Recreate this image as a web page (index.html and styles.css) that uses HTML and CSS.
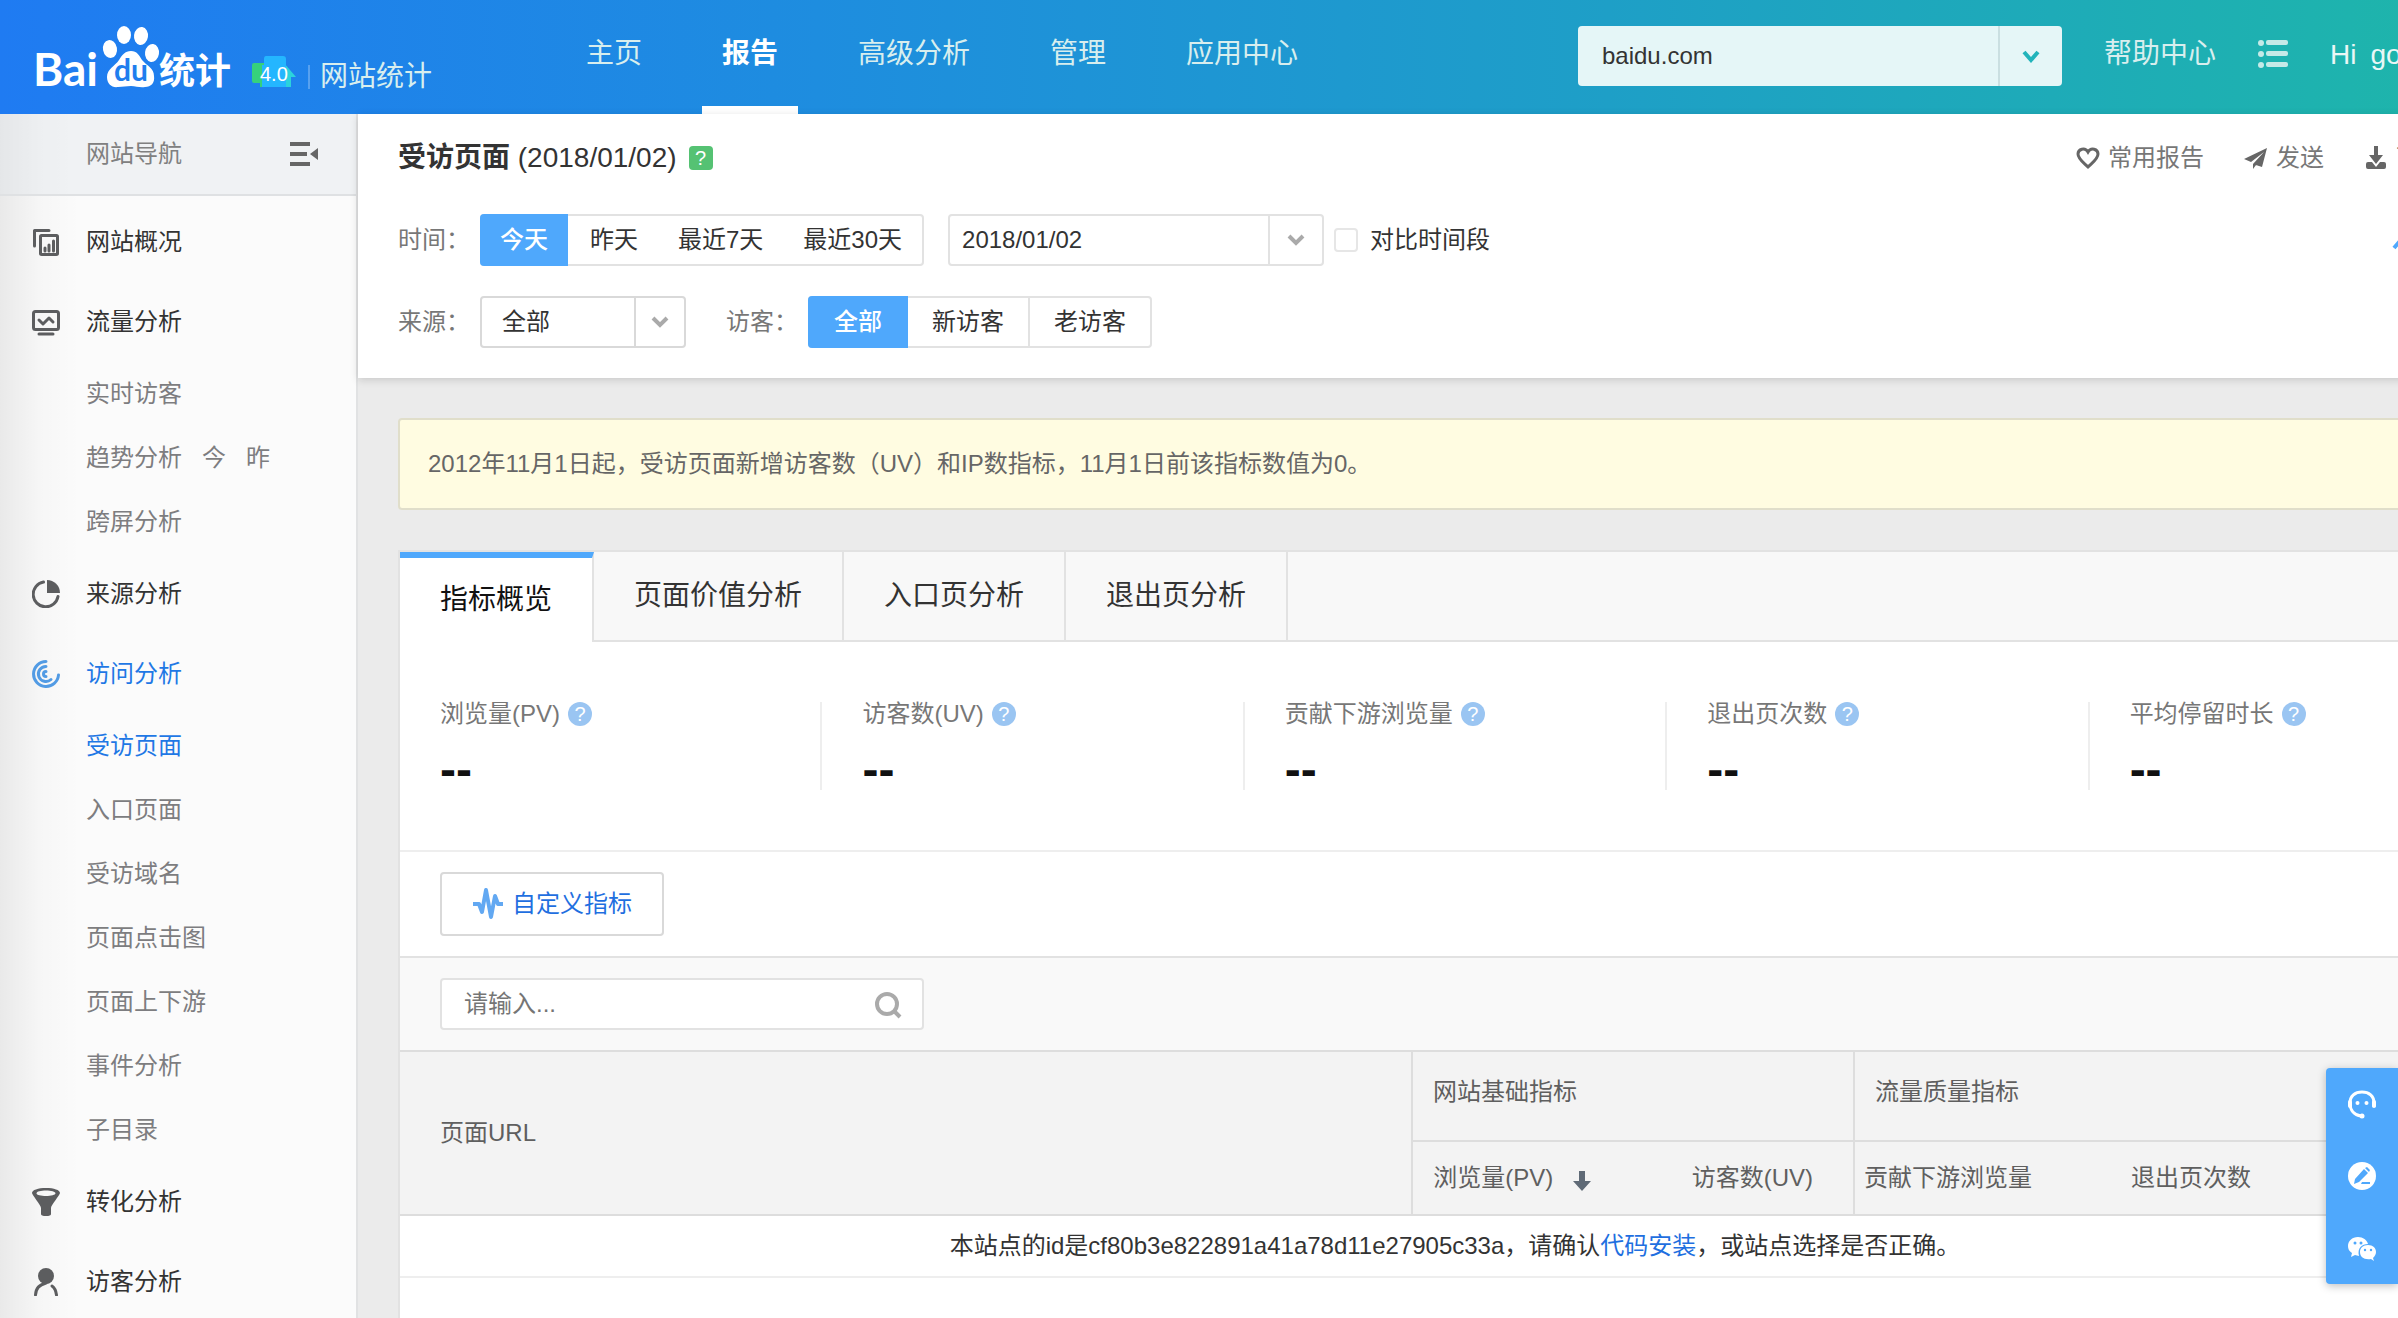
FILE: index.html
```html
<!DOCTYPE html>
<html lang="zh-CN">
  <head>
    <meta charset="UTF-8" />
    <meta name="viewport" content="width=device-width, initial-scale=1.0" />
    <title>受访页面 - 百度统计</title>
    <link rel="stylesheet" href="styles.css">
  </head>

  <body>
    <header class="header">
      <a class="brand" href="#">
        <svg class="brand-logo" width="264" height="64" viewBox="34 24 264 64">
          <text class="logo-latin" x="33" y="85">Bai</text>
          <g fill="#fff">
            <ellipse cx="110" cy="48" rx="7" ry="9" transform="rotate(-10 110 48)" />
            <ellipse cx="124" cy="34" rx="7" ry="9" />
            <ellipse cx="141" cy="35" rx="7" ry="9" transform="rotate(8 141 35)" />
            <ellipse cx="152" cy="52" rx="7" ry="9" transform="rotate(8 152 52)" />
            <path d="M131 50c-6 0-9 4-12 9-4 6-12 9-12 17 0 7 5 11 11 10 5 0 8-1 13-1s9 2 14 1c6 0 10-4 9-11 0-8-7-10-12-16-3-5-5-9-11-9z" />
          </g>
          <text class="logo-du" x="114" y="80">du</text>
          <text class="logo-cn" x="159" y="83">统计</text>
          <path fill="#36d17c" d="M254 62h12v24h-6v-4h-6q-2 0-2-2V64q0-2 2-2z" />
          <path fill="#2bd3dc" d="M284 62l12 14h-5v10h-20z" />
          <path fill="#24b6ff" d="M266 55h17q3 0 3 3v28h-24V64h2v-6q0-3 2-3z" />
          <text class="logo-version" x="260" y="80">4.0</text>
        </svg>
        <span class="brand-name">网站统计</span>
      </a>
      <nav class="nav">
        <a href="#">主页</a>
        <a class="active" href="#">报告</a>
        <a href="#">高级分析</a>
        <a href="#">管理</a>
        <a href="#">应用中心</a>
      </nav>
      <div class="select select-site">
        <select aria-label="选择网站">
          <option>baidu.com</option>
        </select>
        <span class="select-arrow">
          <svg width="20" height="14" viewBox="0 0 20 14"><path d="M3 3l7 8 7-8" /></svg>
        </span>
      </div>
      <a class="header-link" href="#">帮助中心</a>
      <button class="header-list" type="button" aria-label="列表">
        <svg width="30" height="28" viewBox="0 0 30 28">
          <circle cx="3" cy="3" r="3" /><rect x="8" y="0" width="22" height="5" rx="2" />
          <circle cx="3" cy="14" r="3" /><rect x="8" y="11" width="22" height="5" rx="2" />
          <circle cx="3" cy="25" r="3" /><rect x="8" y="22" width="22" height="5" rx="2" />
        </svg>
      </button>
      <div class="header-user"><span>Hi</span><span>go</span></div>
    </header>

    <div class="layout">
      <aside class="sidebar">
        <div class="sidebar-title">
          <span>网站导航</span>
          <button type="button" aria-label="收起导航">
            <svg width="28" height="24" viewBox="0 0 28 24">
              <path d="M0 0h20v4H0zM0 10h17v4H0zM0 20h20v4H0zM28 6v12l-8-6z" />
            </svg>
          </button>
        </div>
        <ul class="menu">
          <li class="menu-item">
            <svg class="line" width="28" height="28" viewBox="0 0 28 28">
              <path d="M2.500 18V2.500H17" />
              <rect x="8.500" y="7.500" width="17" height="19" rx="1" />
              <path d="M13 20v3M17 17v6M21.500 13v10" />
            </svg>
            <a href="#">网站概况</a>
          </li>
          <li class="menu-item">
            <svg class="line" width="28" height="28" viewBox="0 0 28 28">
              <rect x="1.500" y="3.500" width="25" height="18" rx="2" />
              <path d="M7 12l4 4 6-6 4 4M7 26h14" />
            </svg>
            <a href="#">流量分析</a>
          </li>
          <li class="menu-sub"><a href="#">实时访客</a></li>
          <li class="menu-sub"><a href="#">趋势分析</a><a href="#">今</a><a href="#">昨</a></li>
          <li class="menu-sub"><a href="#">跨屏分析</a></li>
          <li class="menu-item">
            <svg class="line" width="28" height="28" viewBox="0 0 28 28">
              <path d="M11.500 2A12.500 12.500 0 1 0 26 16.500" />
              <path class="solid" d="M15 0a13 13 0 0 1 13 13H15z" />
            </svg>
            <a href="#">来源分析</a>
          </li>
          <li class="menu-item current">
            <svg class="line" width="28" height="28" viewBox="0 0 28 28">
              <path d="M14 1.500A12.500 12.500 0 1 0 26.500 15" />
              <path d="M14 6.500a7.500 7.500 0 1 0 5 13" />
              <path d="M14 11.500a2.500 2.500 0 0 0 0 5" />
            </svg>
            <a href="#">访问分析</a>
          </li>
          <li class="menu-sub current"><a href="#">受访页面</a></li>
          <li class="menu-sub"><a href="#">入口页面</a></li>
          <li class="menu-sub"><a href="#">受访域名</a></li>
          <li class="menu-sub"><a href="#">页面点击图</a></li>
          <li class="menu-sub"><a href="#">页面上下游</a></li>
          <li class="menu-sub"><a href="#">事件分析</a></li>
          <li class="menu-sub"><a href="#">子目录</a></li>
          <li class="menu-item">
            <svg width="28" height="28" viewBox="0 0 28 28">
              <path fill-rule="evenodd" d="M14 0c8 0 14 2 14 5 0 2-9 12-9 15v6q0 2-5 2t-5-2v-6C9 17 0 7 0 5c0-3 6-5 14-5zm0 2.500c-5 0-9.500 1-9.500 2.800S9 8 14 8s9.500-1 9.500-2.700S19 2.500 14 2.500z" />
            </svg>
            <a href="#">转化分析</a>
          </li>
          <li class="menu-item">
            <svg class="line" width="28" height="28" viewBox="0 0 28 28">
              <circle class="solid" cx="14" cy="8" r="8" />
              <path d="M14 15C7 17 4 20 3.500 27M20 18c3 2 4 5 4.500 9" />
            </svg>
            <a href="#">访客分析</a>
          </li>
        </ul>
      </aside>

      <main class="main">
        <section class="report-head">
          <div class="title-row">
            <h1>受访页面 <span>(2018/01/02)</span></h1>
            <button class="help help-green" type="button">?</button>
            <div class="actions">
              <a href="#">
                <svg width="24" height="24" viewBox="0 0 24 24"><path class="stroke" d="M12 21C8 17 2 13 2 8c0-5 7-7 10-2 3-5 10-3 10 2 0 5-6 9-10 13z" /></svg>
                常用报告
              </a>
              <a href="#">
                <svg width="24" height="24" viewBox="0 0 24 24"><path d="M23 2L0 13l7 3L20 6 9 18l9 3zM9 18v5l3-4z" /></svg>
                发送
              </a>
              <a href="#">
                <svg width="24" height="24" viewBox="0 0 24 24"><path d="M10 0h4v9h5l-7 9-7-9h5zM4 16h4l4 5 4-5h4q2 0 2 2v3q0 2-2 2H4q-2 0-2-2v-3q0-2 2-2z" /></svg>
                下载
              </a>
            </div>
          </div>

          <div class="filter-row">
            <span class="filter-label">时间：</span>
            <div class="segment segment-time">
              <button class="active" type="button">今天</button>
              <button type="button">昨天</button>
              <button type="button">最近7天</button>
              <button type="button">最近30天</button>
            </div>
            <div class="date-picker">
              <input type="text" value="2018/01/02" aria-label="日期" />
              <button type="button" aria-label="选择日期">
                <svg width="20" height="14" viewBox="0 0 20 14"><path d="M3 3l7 7 7-7" /></svg>
              </button>
            </div>
            <label class="compare"><input type="checkbox" />对比时间段</label>
            <button class="fold" type="button" aria-label="收起筛选">
              <svg width="28" height="20" viewBox="0 0 28 20"><path d="M2 18L14 4l12 14" /></svg>
            </button>
          </div>

          <div class="filter-row">
            <label class="filter-label" for="source">来源：</label>
            <div class="select select-source">
              <select id="source">
                <option>全部</option>
              </select>
              <span class="select-arrow">
                <svg width="20" height="14" viewBox="0 0 20 14"><path d="M3 3l7 7 7-7" /></svg>
              </span>
            </div>
            <span class="filter-label visitor-label">访客：</span>
            <div class="segment segment-visitor">
              <button class="active" type="button">全部</button>
              <button type="button">新访客</button>
              <button type="button">老访客</button>
            </div>
          </div>
        </section>

        <div class="content">
          <p class="notice">2012年11月1日起，受访页面新增访客数（UV）和IP数指标，11月1日前该指标数值为0。</p>

          <section class="panel">
            <div class="tabs">
              <button class="active" type="button">指标概览</button>
              <button type="button">页面价值分析</button>
              <button type="button">入口页分析</button>
              <button type="button">退出页分析</button>
            </div>

            <div class="metrics">
              <div class="metric">
                <div class="metric-name">浏览量(PV)<button class="help" type="button">?</button></div>
                <div class="metric-value">--</div>
              </div>
              <div class="metric">
                <div class="metric-name">访客数(UV)<button class="help" type="button">?</button></div>
                <div class="metric-value">--</div>
              </div>
              <div class="metric">
                <div class="metric-name">贡献下游浏览量<button class="help" type="button">?</button></div>
                <div class="metric-value">--</div>
              </div>
              <div class="metric">
                <div class="metric-name">退出页次数<button class="help" type="button">?</button></div>
                <div class="metric-value">--</div>
              </div>
              <div class="metric">
                <div class="metric-name">平均停留时长<button class="help" type="button">?</button></div>
                <div class="metric-value">--</div>
              </div>
            </div>

            <div class="custom">
              <button type="button">
                <svg width="32" height="32" viewBox="0 0 32 32"><path d="M1 16h6l3 8 4-22 5 27 4-21 3 8h5" /></svg>
                自定义指标
              </button>
            </div>

            <div class="search">
              <div class="search-box">
                <input type="text" placeholder="请输入..." aria-label="搜索页面" />
                <button type="button" aria-label="搜索">
                  <svg width="28" height="28" viewBox="0 0 28 28"><circle cx="13" cy="13" r="10" /><path d="M20 20l6 6" /></svg>
                </button>
              </div>
            </div>

            <table class="report">
              <colgroup>
                <col />
                <col class="col-base" span="2" />
                <col class="col-quality" span="3" />
              </colgroup>
              <thead>
                <tr>
                  <th class="url" rowspan="2">页面URL</th>
                  <th class="group split" colspan="2">网站基础指标</th>
                  <th class="group split" colspan="3">流量质量指标</th>
                </tr>
                <tr>
                  <th class="split">
                    浏览量(PV)
                    <svg class="sort" width="20" height="22" viewBox="0 0 20 22"><path d="M7 1h6v10h6l-9 10-9-10h6z" /></svg>
                  </th>
                  <th>访客数(UV)</th>
                  <th class="split">贡献下游浏览量</th>
                  <th>退出页次数</th>
                  <td></td>
                </tr>
              </thead>
              <tbody>
                <tr>
                  <td colspan="6">本站点的id是cf80b3e822891a41a78d11e27905c33a，请确认<a href="#">代码安装</a>，或站点选择是否正确。</td>
                </tr>
              </tbody>
            </table>
          </section>
        </div>
      </main>
    </div>

    <div class="float-bar">
      <button type="button" aria-label="在线客服">
        <svg width="30" height="30" viewBox="0 0 30 30">
          <path class="stroke" d="M14 27C7 26 3 21 3 14 3 7 8 3 15 3s12 4 12 11v4" />
          <rect x="1" y="11" width="4" height="8" rx="2" /><rect x="25" y="11" width="4" height="8" rx="2" />
          <circle cx="10.500" cy="14" r="2" /><circle cx="19.500" cy="14" r="2" /><circle cx="15" cy="27" r="2.500" />
        </svg>
      </button>
      <button type="button" aria-label="意见反馈">
        <svg width="30" height="30" viewBox="0 0 30 30">
          <circle cx="15" cy="15" r="14" />
          <path class="cut" d="M8 18L17 8l4 4-9 9-5 2zM18 7l2-1 3 3-1 2zM15 21h8v2h-9z" />
        </svg>
      </button>
      <button type="button" aria-label="微信">
        <svg width="30" height="30" viewBox="0 0 30 30">
          <path d="M11 4C5 4 1 8 1 13c0 3 1 5 4 7l-1 4 4-2 4 1c-2-8 3-12 9-12-1-4-5-7-10-7z" />
          <path d="M21 12c-5 0-8 3-8 7 0 5 4 8 11 7l3 2-1-3c2-2 3-4 3-6 0-4-3-7-8-7z" />
          <g class="cut"><circle cx="8" cy="10" r="1.500" /><circle cx="14" cy="10" r="1.500" /><circle cx="18" cy="17" r="1.200" /><circle cx="24" cy="17" r="1.200" /></g>
        </svg>
      </button>
    </div>
  </body>
</html>
```

FILE: styles.css
```css
* {
  box-sizing: border-box;
  margin: 0;
  padding: 0;
}

html {
  height: 100%;
  overflow: hidden;
}

body {
  display: flex;
  flex-direction: column;
  height: 100%;
  min-width: 2552px;
  overflow: hidden;
  font-family: "Liberation Sans", "Noto Sans CJK SC", sans-serif;
  font-size: 24px;
  line-height: 32px;
  color: #333;
  background: #ebebeb;
}

a {
  color: inherit;
  text-decoration: none;
}

button,
input,
select {
  font: inherit;
  color: inherit;
  border: none;
  outline: none;
  background: none;
  appearance: none;
}

button {
  cursor: pointer;
}

svg {
  flex: none;
  display: block;
}

/* header */

.header {
  flex: none;
  display: flex;
  align-items: center;
  height: 114px;
  padding: 0 40px 0 34px;
  color: #d8eeee;
  font-size: 28px;
  white-space: nowrap;
  background: linear-gradient(90deg, #1f7bf2, #1e8ddf 32%, #1e9fc7 63%, #1eb3ae 92%, #1fb6a6);
}

.brand {
  display: flex;
  align-items: flex-end;
}

.brand-logo {
  overflow: visible;
}

.logo-latin {
  font-family: Lato, sans-serif;
  font-size: 46px;
  font-weight: 700;
  fill: #fff;
}

.logo-du {
  font-family: Lato, sans-serif;
  font-size: 30px;
  font-weight: 700;
  fill: #1f7eee;
}

.logo-cn {
  font-size: 36px;
  font-weight: 700;
  fill: #fff;
}

.logo-version {
  font-size: 20px;
  fill: #fff;
}

.brand-name {
  margin-left: 10px;
  padding-left: 10px;
  line-height: 24px;
  border-left: 2px solid rgba(255, 255, 255, 0.25);
}

.nav {
  display: flex;
  gap: 40px;
  margin-left: 134px;
}

.nav a {
  display: flex;
  align-items: center;
  height: 114px;
  padding: 2px 20px 0;
  border-bottom: 8px solid transparent;
}

.nav .active {
  color: #fff;
  font-weight: 700;
  border-color: #fff;
}

.header-link {
  margin-left: 42px;
  padding-bottom: 6px;
}

.header-list {
  margin-left: 42px;
  padding-bottom: 6px;
  fill: #c5e9e7;
}

.header-user {
  display: flex;
  gap: 14px;
  width: 182px;
  margin-left: 42px;
  padding-bottom: 4px;
  color: #e9f7f6;
}

/* drop-downs: select and arrow share one grid cell */

.select {
  display: grid;
  height: 52px;
  border: 2px solid #d9d9d9;
  border-radius: 4px;
  background: #fff;
}

.select select,
.select-arrow {
  grid-area: 1 / 1;
}

.select select {
  padding: 0 20px;
}

.select-arrow {
  display: flex;
  align-items: center;
  justify-content: center;
  justify-self: end;
  width: 50px;
  border-left: 2px solid #d9d9d9;
  pointer-events: none;
}

.select-arrow path,
.date-picker path {
  fill: none;
  stroke: #aaa;
  stroke-width: 4;
}

.select-site {
  width: 484px;
  height: 60px;
  margin-left: auto;
  margin-bottom: 2px;
  color: #333;
  font-size: 24px;
  border: none;
  background: #e5f6f7;
}

.select-site select {
  padding: 0 24px;
}

.select-site .select-arrow {
  width: 64px;
  border-color: #cadfe1;
}

.select-site path {
  stroke: #22b4bb;
}

.select-source {
  width: 206px;
}

/* sidebar */

.layout {
  flex: 1;
  display: flex;
  min-height: 0;
}

.sidebar {
  flex: none;
  width: 358px;
  overflow: hidden;
  border-right: 2px solid #e1e2e3;
  background: linear-gradient(90deg, rgba(0, 0, 0, 0.07), rgba(0, 0, 0, 0.02) 40px, transparent 80px), #fbfbfb;
}

.sidebar-title {
  display: flex;
  align-items: center;
  justify-content: space-between;
  height: 82px;
  padding: 0 38px 0 86px;
  color: #808080;
  border-bottom: 2px solid #dfe1e3;
  background: rgba(220, 225, 232, 0.35);
}

.sidebar-title svg {
  fill: #666;
}

.menu {
  padding-top: 6px;
  list-style: none;
}

.menu-item {
  display: flex;
  align-items: center;
  gap: 26px;
  height: 80px;
  padding-left: 32px;
}

.menu-item svg {
  fill: #5c5d5f;
}

.menu-item .line {
  fill: none;
  stroke: #5c5d5f;
  stroke-width: 3;
  stroke-linecap: round;
  stroke-linejoin: round;
}

.menu-item .solid {
  fill: #5c5d5f;
  stroke: none;
}

.menu-sub {
  display: flex;
  align-items: center;
  gap: 20px;
  height: 64px;
  padding-left: 86px;
  color: #7d7d80;
}

.menu .current {
  color: #1f78e5;
}

.current .line {
  stroke: #529be4;
}

/* report header */

.main {
  flex: 1;
  display: flex;
  flex-direction: column;
  min-width: 0;
}

.report-head {
  flex: none;
  padding: 24px 40px 30px;
  background: #fff;
  box-shadow: 0 2px 8px rgba(0, 0, 0, 0.15);
}

.title-row {
  display: flex;
  align-items: center;
  height: 40px;
  margin-bottom: 36px;
}

.title-row h1 {
  font-size: 28px;
  line-height: 40px;
}

.title-row h1 span {
  font-weight: 400;
}

.help {
  width: 24px;
  height: 24px;
  margin-left: 8px;
  color: #fff;
  font-size: 20px;
  line-height: 24px;
  text-align: center;
  border-radius: 50%;
  background: #9ac5f2;
}

.help-green {
  margin-left: 12px;
  border-radius: 4px;
  background: #55c273;
}

.actions {
  display: flex;
  gap: 40px;
  margin-left: auto;
  padding-right: 68px;
  color: #777;
}

.actions a {
  display: flex;
  align-items: center;
  gap: 8px;
}

.actions svg {
  fill: #666;
}

.actions .stroke {
  fill: none;
  stroke: #666;
  stroke-width: 3;
}

.filter-row {
  display: flex;
  align-items: center;
  height: 52px;
}

.filter-row + .filter-row {
  margin-top: 30px;
}

.filter-label {
  width: 82px;
  color: #777;
}

.visitor-label {
  margin-left: 40px;
}

.segment {
  display: flex;
  height: 52px;
  border: 2px solid #e2e2e2;
  border-radius: 4px;
}

.segment button {
  padding: 0 20px;
}

.segment .active {
  margin: -2px 2px -2px -2px;
  color: #fff;
  font-weight: 500;
  border-radius: 4px 0 0 4px;
  background: #4fa8fc;
}

.segment-visitor button {
  padding: 0 24px;
}

.segment-visitor .active {
  margin-right: 0;
  padding: 0 26px;
}

.segment-visitor button + button + button {
  border-left: 2px solid #e2e2e2;
}

.date-picker {
  display: flex;
  width: 376px;
  height: 52px;
  margin-left: 24px;
  border: 2px solid #e2e2e2;
  border-radius: 4px;
}

.date-picker input {
  flex: 1;
  min-width: 0;
  padding: 0 12px;
}

.date-picker button {
  width: 54px;
  padding: 0 16px;
  border-left: 2px solid #e2e2e2;
}

.compare {
  display: flex;
  align-items: center;
  gap: 12px;
  margin-left: 10px;
}

.compare input {
  width: 24px;
  height: 24px;
  border: 2px solid #e6e6e6;
  border-radius: 4px;
}

.fold {
  margin-left: auto;
  margin-right: 92px;
}

.fold path {
  fill: none;
  stroke: #4fa8fc;
  stroke-width: 4;
}

/* content */

.content {
  flex: 1;
  display: flex;
  flex-direction: column;
  gap: 40px;
  min-height: 0;
  padding: 40px 40px 0;
}

.notice {
  padding: 0 28px;
  color: #666;
  line-height: 88px;
  border: 2px solid #e0deca;
  border-radius: 4px;
  background: #fffce1;
}

.panel {
  flex: 1;
  border: 2px solid #e2e2e2;
  border-bottom: none;
  background: #fff;
}

.tabs {
  display: flex;
  height: 90px;
  background: #f8f8f8;
}

.tabs::after {
  content: "";
  flex: 1;
  border-bottom: 2px solid #e2e2e2;
}

.tabs button {
  padding: 0 40px;
  font-size: 28px;
  border-right: 2px solid #e2e2e2;
  border-bottom: 2px solid #e2e2e2;
}

.tabs .active {
  color: #111;
  border-top: 6px solid #4fa8fc;
  border-bottom: none;
  background: #fff;
}

.metrics {
  display: flex;
  padding: 60px 0;
  border-bottom: 2px solid #eee;
}

.metric {
  flex: 1;
  height: 88px;
  padding-left: 40px;
  border-right: 2px solid #eee;
}

.metric:last-child {
  border-right: none;
}

.metric-name {
  display: flex;
  align-items: center;
  height: 24px;
  color: #777;
}

.metric-value {
  margin-top: 24px;
  color: #111;
  font-size: 48px;
  font-weight: 700;
  line-height: 40px;
}

.custom {
  padding: 20px 40px;
}

.custom button {
  display: flex;
  align-items: center;
  gap: 8px;
  height: 64px;
  padding: 0 30px;
  color: #1f6fe0;
  border: 2px solid #d9d9d9;
  border-radius: 4px;
}

.custom path {
  fill: none;
  stroke: #62a8f2;
  stroke-width: 4;
  stroke-linejoin: round;
}

.search {
  padding: 20px 40px;
  border-top: 2px solid #e2e2e2;
  background: #f9f9f9;
}

.search-box {
  display: flex;
  width: 484px;
  height: 52px;
  border: 2px solid #e2e2e2;
  border-radius: 4px;
  background: #fff;
}

.search-box input {
  flex: 1;
  min-width: 0;
  padding-left: 22px;
}

.search-box input::placeholder {
  color: #757575;
}

.search-box button {
  padding: 2px 20px 0;
}

.search-box svg {
  fill: none;
  stroke: #aaa;
  stroke-width: 4;
}

.report {
  width: 100%;
  table-layout: fixed;
  border-spacing: 0;
  border-top: 2px solid #ddd;
}

.col-base {
  width: 221px;
}

.col-quality {
  width: 219px;
}

.report thead {
  color: #5f5f5f;
  background: #f3f3f3;
}

.report th {
  height: 74px;
  padding-right: 40px;
  font-weight: 400;
  text-align: right;
  white-space: nowrap;
  border-bottom: 2px solid #ddd;
}

.report .url {
  padding-left: 40px;
  text-align: left;
}

.report .group {
  height: 90px;
  padding: 0 20px 8px;
  text-align: left;
}

.report .split {
  border-left: 2px solid #ddd;
}

.report thead td {
  border-bottom: 2px solid #ddd;
}

.sort {
  display: inline-block;
  margin-left: 12px;
  vertical-align: -6px;
  fill: #5f6a76;
}

.report tbody td {
  height: 62px;
  text-align: center;
  border-bottom: 2px solid #eee;
}

.report tbody a {
  color: #1f6fe0;
}

/* service buttons over the page edge */

.float-bar {
  position: fixed;
  right: 0;
  bottom: 34px;
  display: flex;
  flex-direction: column;
  border-radius: 4px 0 0 4px;
  background: #4fa8fc;
  box-shadow: 0 2px 8px rgba(0, 0, 0, 0.25);
}

.float-bar button {
  height: 72px;
  padding: 0 21px;
  fill: #fff;
}

.float-bar .stroke {
  fill: none;
  stroke: #fff;
  stroke-width: 3;
}

.float-bar .cut {
  fill: #4fa8fc;
}
```
